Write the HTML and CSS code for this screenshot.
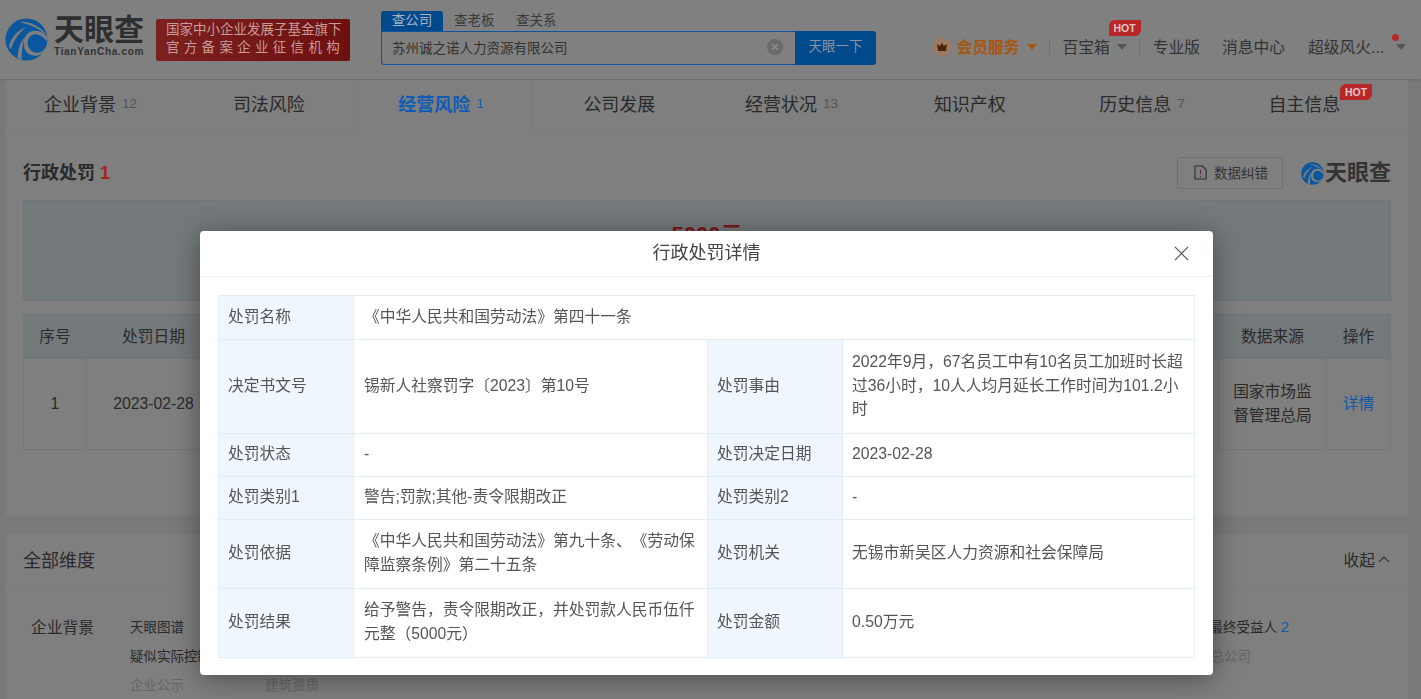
FILE: index.html
```html
<!DOCTYPE html>
<html lang="zh-CN">

<head>
  <meta charset="UTF-8">
  <meta name="viewport" content="width=device-width, initial-scale=1.0">
  <title>行政处罚详情</title>
  <link rel="stylesheet" href="styles.css">
</head>

<body>
<svg class="defs" width="0" height="0">
  <symbol id="logo_mark" viewBox="0 0 44 44">
    <circle cx="22" cy="22" r="21.5" fill="currentColor"/>
    <path fill="#7f7f7f" d="M15 4C25 3 36 8 44 19C37 12 27 7 15 4Z"/>
    <path fill="#7f7f7f" d="M20 31C17 20 23 13 31 13C36 13 41 16 44 21L43 24C39 19 35 16.5 31 16.5C26 16.5 22 22 23.5 28C25 34 31 37 36 35C39 34 41.5 31 43 27L43 30C40 37 34 40 28 38C23 37 21 35 20 31Z"/>
    <path fill="#7f7f7f" d="M4 29C6 21 12 13 22 9C15 15 9 22 6 32Z"/>
    <path fill="#7f7f7f" d="M13 41C13 33 15 26 20 20C18 27 17 34 17 43Z"/>
  </symbol>
</svg>

<header class="top_bar">
  <div class="logo">
    <svg class="logo_mark"><use href="#logo_mark"/></svg>
    <div class="logo_text">
      <div class="logo_name">天眼查</div>
      <div class="logo_url">TianYanCha.com</div>
    </div>
  </div>
  <div class="slogan">
    <div>国家中小企业发展子基金旗下</div>
    <div class="slogan_wide">官方备案企业征信机构</div>
  </div>
  <div class="search">
    <div class="search_tabs">
      <span class="search_tab search_tab_active">查公司</span>
      <span class="search_tab">查老板</span>
      <span class="search_tab">查关系</span>
    </div>
    <div class="search_row">
      <div class="search_input">
        <span>苏州诚之诺人力资源有限公司</span>
        <svg class="search_clear" viewBox="0 0 16 16">
          <circle cx="8" cy="8" r="8" fill="#6a6a6a"/>
          <path d="M5 5L11 11M11 5L5 11" stroke="#8f8f8f" stroke-width="1.4"/>
        </svg>
      </div>
      <div class="search_button">天眼一下</div>
    </div>
  </div>
  <nav class="top_nav">
    <svg class="vip_icon" viewBox="0 0 18 18">
      <circle cx="9" cy="9" r="9" fill="#9d7a60"/>
      <path fill="#4a2508" d="M4 6L7 8L9 5L11 8L14 6L13 13H5Z"/>
    </svg>
    <span class="vip_text">会员服务</span>
    <span class="caret caret_vip"></span>
    <span class="nav_sep"></span>
    <span class="nav_item nav_box">百宝箱<span class="hot hot_nav">HOT</span></span>
    <span class="caret"></span>
    <span class="nav_sep"></span>
    <span class="nav_item">专业版</span>
    <span class="nav_item nav_msg">消息中心</span>
    <span class="nav_item nav_user">超级风火...<span class="red_dot"></span></span>
    <span class="caret"></span>
  </nav>
</header>

<main class="content">
  <section class="panel panel_risk">
    <div class="tabs">
      <div class="tab">企业背景<span class="tab_count">12</span></div>
      <div class="tab">司法风险</div>
      <div class="tab tab_active">经营风险<span class="tab_count">1</span></div>
      <div class="tab">公司发展</div>
      <div class="tab">经营状况<span class="tab_count">13</span></div>
      <div class="tab">知识产权</div>
      <div class="tab">历史信息<span class="tab_count">7</span></div>
      <div class="tab tab_hot">自主信息<span class="hot hot_tab">HOT</span></div>
    </div>

    <div class="block_head">
      <div class="block_title">行政处罚<span class="block_count">1</span></div>
      <div class="block_tools">
        <div class="fix_button">
          <svg class="fix_icon" viewBox="0 0 14 16" fill="none" stroke="#2c2c2c" stroke-width="1.2">
            <path d="M1 1H9L13 5V15H1Z"/>
            <path d="M7 5V10M7 11.5V13" stroke="#5a2a5a"/>
          </svg>
          数据纠错
        </div>
        <svg class="brand_mark"><use href="#logo_mark"/></svg>
        <span class="brand_name">天眼查</span>
      </div>
    </div>

    <div class="summary">5000元</div>

    <table class="list_table">
      <colgroup>
        <col class="col_num">
        <col class="col_date">
        <col>
        <col class="col_source">
        <col class="col_action">
      </colgroup>
      <tr class="list_head">
        <th>序号</th>
        <th>处罚日期</th>
        <th></th>
        <th>数据来源</th>
        <th>操作</th>
      </tr>
      <tr class="list_row">
        <td>1</td>
        <td>2023-02-28</td>
        <td></td>
        <td>国家市场监<br>督管理总局</td>
        <td class="link">详情</td>
      </tr>
    </table>
  </section>

  <section class="panel panel_all">
    <div class="all_head">
      <span class="all_title">全部维度</span>
      <span class="all_fold">收起
        <svg class="fold_icon" viewBox="0 0 12 7" fill="none" stroke="#333" stroke-width="1.2"><path d="M1 6L6 1L11 6"/></svg>
      </span>
    </div>
    <div class="all_body">
      <div class="all_label">企业背景</div>
      <div class="all_grid">
        <span>天眼图谱</span>
        <span class="all_right">最终受益人 <em>2</em></span>
        <span>疑似实际控制人</span>
        <span class="all_right all_off all_company">总公司</span>
        <span class="all_off all_short">企业公示</span>
        <span class="all_off">建筑资质</span>
      </div>
    </div>
  </section>
</main>

<div class="modal">
  <div class="modal_head">
    <span>行政处罚详情</span>
    <svg class="modal_close" viewBox="0 0 16 16" fill="none" stroke="#555" stroke-width="1.3">
      <path d="M1 1L15 15M15 1L1 15"/>
    </svg>
  </div>
  <div class="modal_body">
    <table class="detail">
      <colgroup>
        <col class="detail_key">
        <col class="detail_val">
        <col class="detail_key">
        <col>
      </colgroup>
      <tr class="row_44">
        <th>处罚名称</th>
        <td colspan="3">《中华人民共和国劳动法》第四十一条</td>
      </tr>
      <tr class="row_94">
        <th>决定书文号</th>
        <td>锡新人社察罚字〔2023〕第10号</td>
        <th>处罚事由</th>
        <td>2022年9月，67名员工中有10名员工加班时长超过36小时，10人人均月延长工作时间为101.2小时</td>
      </tr>
      <tr class="row_43">
        <th>处罚状态</th>
        <td>-</td>
        <th>处罚决定日期</th>
        <td>2023-02-28</td>
      </tr>
      <tr class="row_43">
        <th>处罚类别1</th>
        <td>警告;罚款;其他-责令限期改正</td>
        <th>处罚类别2</th>
        <td>-</td>
      </tr>
      <tr class="row_69">
        <th>处罚依据</th>
        <td>《中华人民共和国劳动法》第九十条、《劳动保障监察条例》第二十五条</td>
        <th>处罚机关</th>
        <td>无锡市新吴区人力资源和社会保障局</td>
      </tr>
      <tr class="row_69">
        <th>处罚结果</th>
        <td>给予警告，责令限期改正，并处罚款人民币伍仟元整（5000元）</td>
        <th>处罚金额</th>
        <td>0.50万元</td>
      </tr>
    </table>
  </div>
</div>
</body>

</html>
```

FILE: styles.css
```css
* {
    box-sizing: border-box;
    font-family: "Liberation Sans", "Noto Sans CJK SC", sans-serif;
    text-spacing-trim: space-all;
}

html, body {
    height: 100%;
}

body {
    margin: 0;
    overflow: hidden;
    background-color: #797979;
    color: #2a2a2a;
    font-size: 15.75px;
}

.defs {
    position: absolute;
}

/* top bar */

.top_bar {
    height: 79px;
    display: flex;
    align-items: center;
    padding: 0 15px 0 5px;
    background-color: #808080;
    box-shadow: 0 1px 3px rgba(0, 0, 0, 0.15);
}

.logo {
    width: 151px;
    display: flex;
    align-items: center;
    gap: 6px;
    color: #0a57a0;
}

.logo_mark {
    width: 43px;
    height: 43px;
}

.logo_text {
    padding-bottom: 7px;
}

.logo_name {
    font-size: 30px;
    font-weight: 700;
    line-height: 32px;
    color: #2e2e2e;
}

.logo_url {
    font-size: 10px;
    font-weight: 700;
    line-height: 12px;
    letter-spacing: 0.7px;
    color: #333;
}

.slogan {
    width: 194px;
    height: 42px;
    padding: 2px 0 0 10px;
    border-radius: 2px;
    background: linear-gradient(90deg, #7c2020, #6e1010);
    color: #c99a9a;
    font-size: 13.5px;
    line-height: 18px;
}

.slogan_wide {
    letter-spacing: 4.3px;
}

.search {
    width: 495px;
    margin-left: 31px;
    padding-bottom: 4px;
}

.search_tabs {
    display: flex;
    height: 20px;
    gap: 11px;
    font-size: 13.5px;
    line-height: 20px;
}

.search_tab {
    width: 51px;
    color: #3a3a3a;
}

.search_tab_active {
    width: 62px;
    border-radius: 3px 3px 0 0;
    background-color: #004a8c;
    color: #a6b3c2;
    text-align: center;
}

.search_row {
    display: flex;
    height: 34px;
}

.search_input {
    flex: 1;
    display: flex;
    align-items: center;
    justify-content: space-between;
    padding: 0 12px 2px 10px;
    border: 1px solid #0a57a0;
    border-right: 0;
    border-radius: 0 0 0 3px;
    font-size: 13.5px;
    color: #333;
}

.search_clear {
    width: 16px;
    height: 16px;
}

.search_button {
    width: 81px;
    border-radius: 0 3px 3px 0;
    background-color: #004a8c;
    color: #8594a8;
    font-size: 13.5px;
    line-height: 32px;
    text-align: center;
}

.top_nav {
    margin-left: auto;
    margin-top: 14px;
    display: flex;
    align-items: center;
    color: #333;
}

.vip_icon {
    width: 18px;
    height: 18px;
    margin-right: 6px;
}

.vip_text {
    font-weight: 700;
    color: #a8560f;
}

.caret {
    width: 0;
    height: 0;
    margin-left: 7px;
    border-left: 5px solid transparent;
    border-right: 5px solid transparent;
    border-top: 6px solid #555;
}

.caret_vip {
    border-top-color: #a8560f;
}

.nav_sep {
    width: 1px;
    height: 16px;
    margin: 0 12.5px;
    background-color: #707070;
}

.nav_item {
    position: relative;
    white-space: nowrap;
}

.nav_msg {
    margin-left: 22px;
}

.nav_user {
    margin-left: 23px;
    width: 81px;
}

.hot {
    position: absolute;
    width: 32px;
    height: 16px;
    border-radius: 6px 0 6px 0;
    background-color: #b82828;
    color: #e0c4c4;
    font-size: 10.5px;
    font-weight: 700;
    line-height: 16px;
    text-align: center;
}

.hot_nav {
    top: -15px;
    left: 46px;
}

.red_dot {
    position: absolute;
    top: -1px;
    right: -10px;
    width: 7px;
    height: 7px;
    border-radius: 50%;
    background-color: #b82828;
}

/* page */

.content {
    padding: 1px 12px 0 5px;
}

.panel {
    background-color: #7f7f7f;
    border: 1px solid #7a7a7a;
}

.panel_risk {
    height: 436px;
    padding-bottom: 67px;
    border-top: 0;
}

.tabs {
    display: grid;
    grid-template-columns: repeat(8, 1fr);
    height: 53px;
    border-bottom: 1px solid #7a7a7a;
}

.tab {
    display: flex;
    align-items: center;
    justify-content: center;
    padding-bottom: 7px;
    font-size: 18px;
    color: #2a2a2a;
}

.tab_active {
    height: 53px;
    border-left: 1px solid #7a7a7a;
    border-right: 1px solid #7a7a7a;
    background-color: #7f7f7f;
    color: #0f5cb5;
    font-weight: 700;
}

.tab_hot {
    position: relative;
    padding-right: 32px;
}

.hot_tab {
    top: 4px;
    right: 36px;
}

.tab_count {
    margin: 0 6px;
    font-size: 13.5px;
    color: #555;
}

.tab_active .tab_count {
    color: #0f5cb5;
    font-weight: 400;
}

.block_head {
    display: flex;
    align-items: center;
    justify-content: space-between;
    height: 67px;
    padding: 13px 17px 0 17px;
}

.block_title {
    padding-bottom: 5px;
    font-size: 18px;
    font-weight: 700;
}

.block_count {
    margin-left: 5px;
    color: #a52525;
}

.block_tools {
    display: flex;
    align-items: center;
    color: #0a57a0;
}

.fix_button {
    display: flex;
    align-items: center;
    gap: 7px;
    width: 106px;
    height: 32px;
    padding: 0 0 2px 16px;
    border: 1px solid #6f6f6f;
    border-radius: 2px;
    color: #333;
    font-size: 13.5px;
}

.fix_icon {
    width: 13px;
    height: 15px;
}

.brand_mark {
    width: 23px;
    height: 23px;
    margin-left: 18px;
}

.brand_name {
    margin-left: 1px;
    font-size: 22px;
    font-weight: 700;
    line-height: 24px;
    color: #333;
}

.summary {
    height: 101px;
    margin: 0 17px;
    padding-top: 15px;
    border: 1px solid #6d757b;
    background-color: #74797c;
    color: #7a1a1a;
    font-size: 22px;
    font-weight: 700;
    text-align: center;
}

.list_table {
    width: 1368px;
    margin: 13px 17px 0;
    border-collapse: collapse;
    table-layout: fixed;
}

.list_table th,
.list_table td {
    border: 1px solid #6f777d;
    font-weight: 400;
    line-height: 24px;
    text-align: center;
}

.list_head {
    height: 44px;
    background-color: #74797c;
}

.list_row {
    height: 91px;
}

.col_num {
    width: 63px;
}

.col_date {
    width: 134px;
}

.col_source {
    width: 108px;
}

.col_action {
    width: 64px;
}

.link {
    color: #0f57a8;
}

.panel_all {
    height: 200px;
    margin-top: 17px;
}

.all_head {
    display: flex;
    align-items: center;
    justify-content: space-between;
    height: 54px;
    padding: 0 18px 3px 17px;
    border-bottom: 1px solid #7a7a7a;
}

.all_title {
    font-size: 18px;
}

.all_fold {
    display: flex;
    align-items: center;
    gap: 3px;
}

.fold_icon {
    width: 12px;
    height: 7px;
}

.all_body {
    display: flex;
    padding: 25px 0 0 25px;
}

.all_label {
    width: 99px;
    line-height: 29px;
}

.all_grid {
    flex: 1;
    display: grid;
    grid-template-columns: 135px 1fr;
    grid-auto-rows: 29px;
    align-items: center;
    margin-top: -2px;
    font-size: 13.5px;
}

.all_right {
    justify-self: end;
    margin-right: 119px;
}

.all_right em {
    font-style: normal;
    font-size: 15px;
    color: #0f57a8;
}

.all_company {
    margin-right: 157px;
}

.all_off {
    color: #666;
}

/* modal */

.modal {
    position: fixed;
    top: 231px;
    left: 200px;
    width: 1013px;
    height: 444px;
    border-radius: 4px;
    background-color: #fff;
    box-shadow: 0 4px 28px rgba(0, 0, 0, 0.4);
}

.modal_head {
    position: relative;
    height: 46px;
    border-bottom: 1px solid #f0f0f0;
    color: #444;
    font-size: 18px;
    line-height: 44px;
    text-align: center;
}

.modal_close {
    position: absolute;
    top: 15px;
    right: 24px;
    width: 15px;
    height: 15px;
}

.modal_body {
    padding: 18px;
}

.detail {
    width: 977px;
    border-collapse: collapse;
    table-layout: fixed;
    color: #555;
    line-height: 23.6px;
}

.detail th,
.detail td {
    padding: 0 10px 2px;
    border: 1px solid #e3edf6;
    font-weight: 400;
    text-align: left;
}

.detail th {
    padding-left: 9px;
    background-color: #eff6fd;
}

.detail th + td + th + td {
    padding-left: 9px;
}

.detail_key {
    width: 135px;
}

.detail_val {
    width: 354px;
}

.row_44 {
    height: 44px;
}

.row_94 {
    height: 94px;
}

.row_43 {
    height: 43px;
}

.row_69 {
    height: 69px;
}
```
